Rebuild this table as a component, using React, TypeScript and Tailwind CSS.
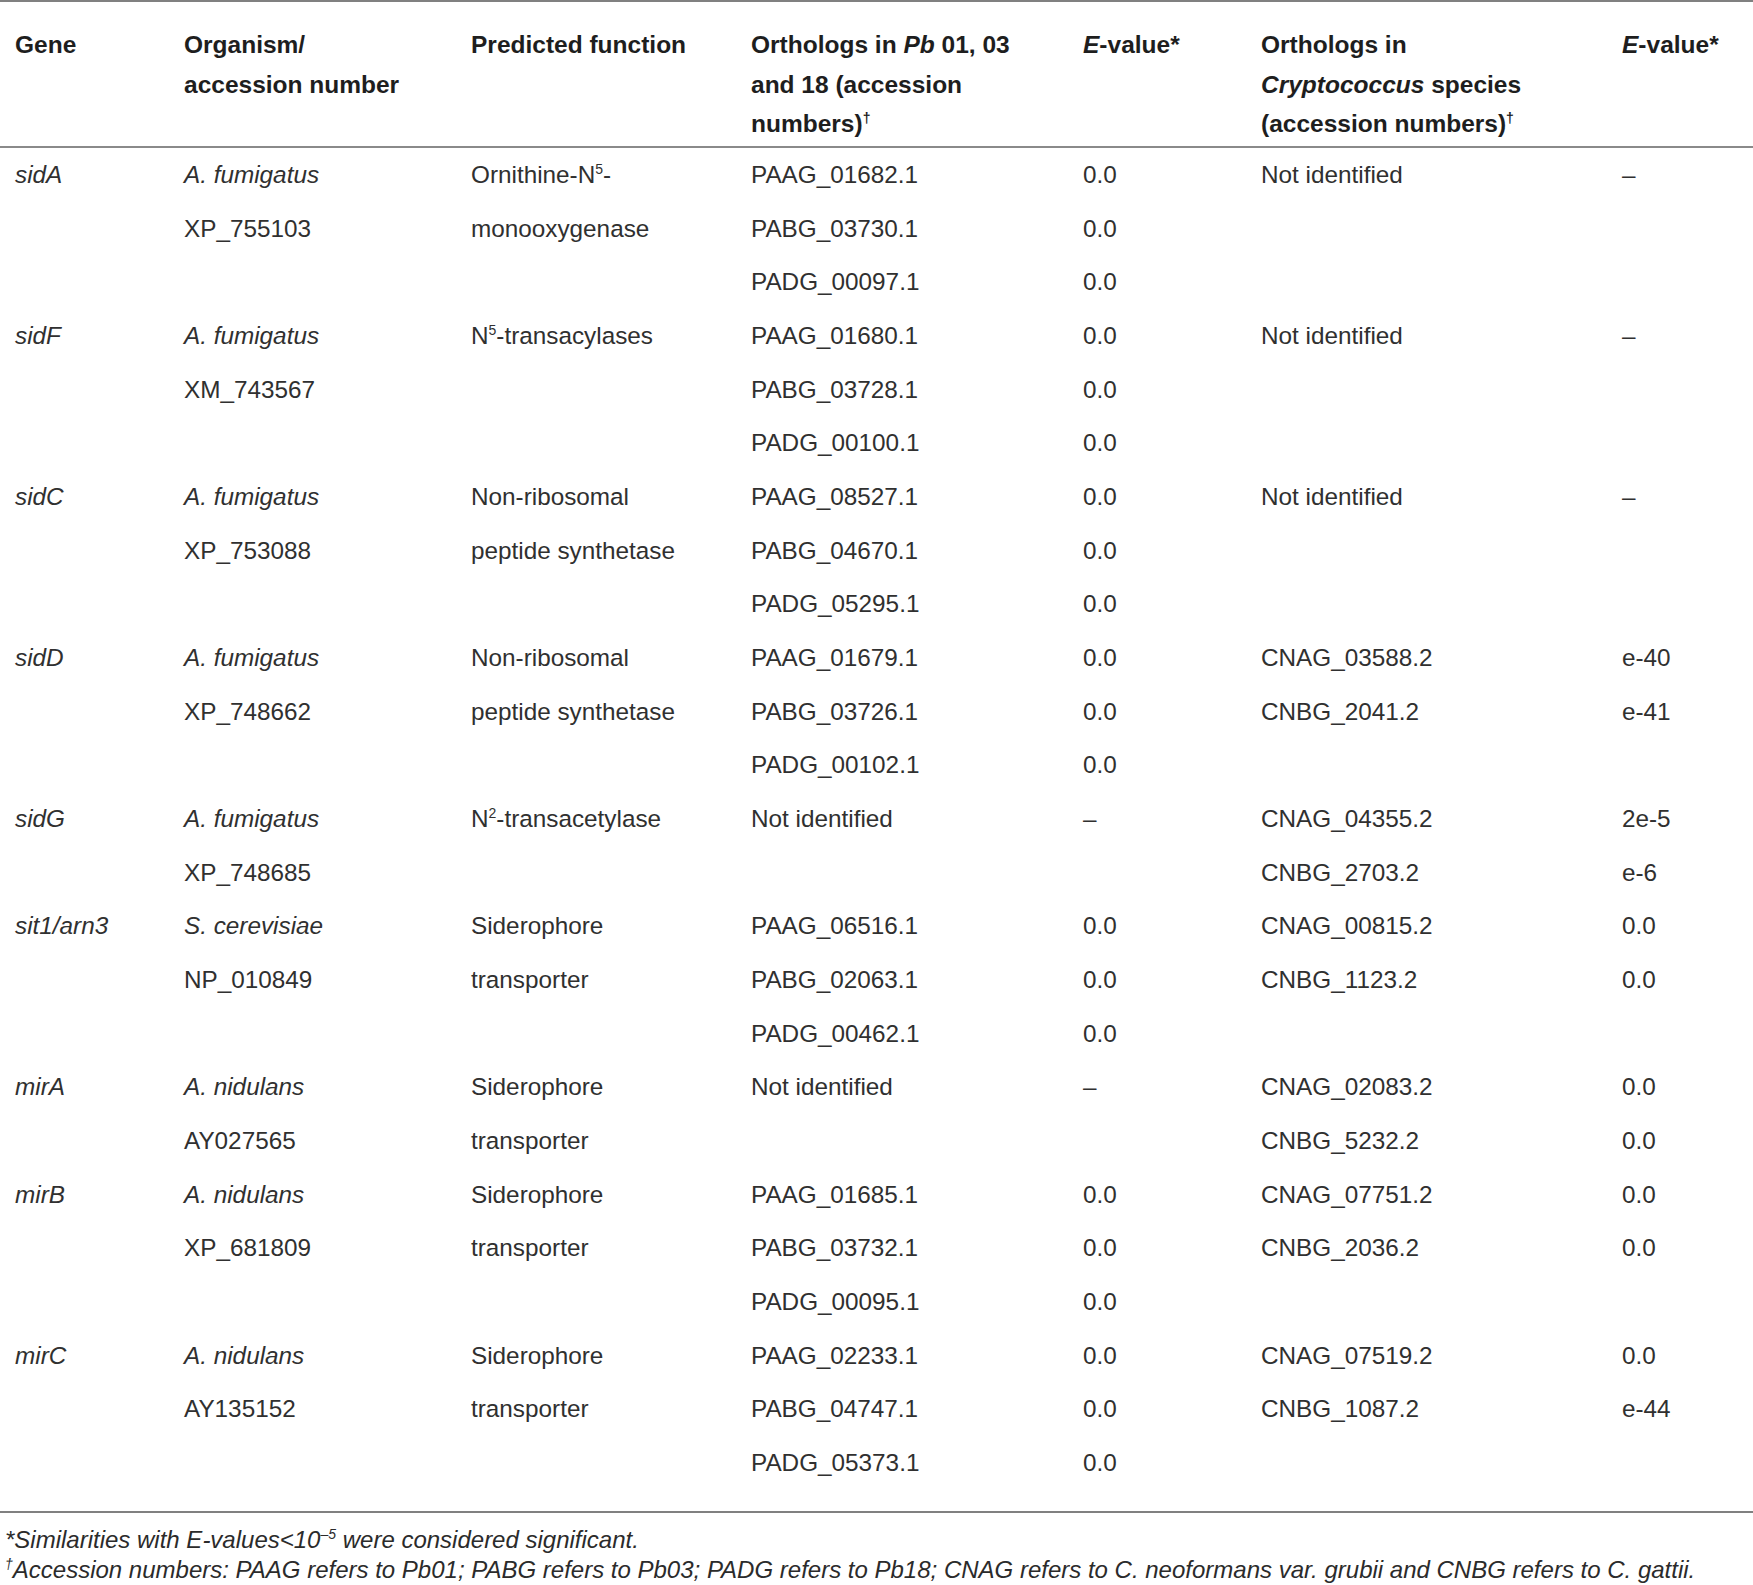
import React from "react";

type Cell = React.ReactNode[];
type Group = { gene: string; org: Cell; fn: Cell; pb: Cell; pe: Cell; cr: Cell; ce: Cell };

const I = ({ children }: { children: React.ReactNode }) => <i>{children}</i>;
const Sup = ({ children }: { children: React.ReactNode }) => (
  <sup className="text-[14px] relative top-[-9px] align-baseline leading-none">{children}</sup>
);

const groups: Group[] = [
  {
    gene: "sidA",
    org: [<I>A. fumigatus</I>, "XP_755103"],
    fn: [<>Ornithine-N<Sup>5</Sup>-</>, "monooxygenase"],
    pb: ["PAAG_01682.1", "PABG_03730.1", "PADG_00097.1"],
    pe: ["0.0", "0.0", "0.0"],
    cr: ["Not identified"],
    ce: ["–"],
  },
  {
    gene: "sidF",
    org: [<I>A. fumigatus</I>, "XM_743567"],
    fn: [<>N<Sup>5</Sup>-transacylases</>],
    pb: ["PAAG_01680.1", "PABG_03728.1", "PADG_00100.1"],
    pe: ["0.0", "0.0", "0.0"],
    cr: ["Not identified"],
    ce: ["–"],
  },
  {
    gene: "sidC",
    org: [<I>A. fumigatus</I>, "XP_753088"],
    fn: ["Non-ribosomal", "peptide synthetase"],
    pb: ["PAAG_08527.1", "PABG_04670.1", "PADG_05295.1"],
    pe: ["0.0", "0.0", "0.0"],
    cr: ["Not identified"],
    ce: ["–"],
  },
  {
    gene: "sidD",
    org: [<I>A. fumigatus</I>, "XP_748662"],
    fn: ["Non-ribosomal", "peptide synthetase"],
    pb: ["PAAG_01679.1", "PABG_03726.1", "PADG_00102.1"],
    pe: ["0.0", "0.0", "0.0"],
    cr: ["CNAG_03588.2", "CNBG_2041.2"],
    ce: ["e-40", "e-41"],
  },
  {
    gene: "sidG",
    org: [<I>A. fumigatus</I>, "XP_748685"],
    fn: [<>N<Sup>2</Sup>-transacetylase</>],
    pb: ["Not identified"],
    pe: ["–"],
    cr: ["CNAG_04355.2", "CNBG_2703.2"],
    ce: ["2e-5", "e-6"],
  },
  {
    gene: "sit1/arn3",
    org: [<I>S. cerevisiae</I>, "NP_010849"],
    fn: ["Siderophore", "transporter"],
    pb: ["PAAG_06516.1", "PABG_02063.1", "PADG_00462.1"],
    pe: ["0.0", "0.0", "0.0"],
    cr: ["CNAG_00815.2", "CNBG_1123.2"],
    ce: ["0.0", "0.0"],
  },
  {
    gene: "mirA",
    org: [<I>A. nidulans</I>, "AY027565"],
    fn: ["Siderophore", "transporter"],
    pb: ["Not identified"],
    pe: ["–"],
    cr: ["CNAG_02083.2", "CNBG_5232.2"],
    ce: ["0.0", "0.0"],
  },
  {
    gene: "mirB",
    org: [<I>A. nidulans</I>, "XP_681809"],
    fn: ["Siderophore", "transporter"],
    pb: ["PAAG_01685.1", "PABG_03732.1", "PADG_00095.1"],
    pe: ["0.0", "0.0", "0.0"],
    cr: ["CNAG_07751.2", "CNBG_2036.2"],
    ce: ["0.0", "0.0"],
  },
  {
    gene: "mirC",
    org: [<I>A. nidulans</I>, "AY135152"],
    fn: ["Siderophore", "transporter"],
    pb: ["PAAG_02233.1", "PABG_04747.1", "PADG_05373.1"],
    pe: ["0.0", "0.0", "0.0"],
    cr: ["CNAG_07519.2", "CNBG_1087.2"],
    ce: ["0.0", "e-44"],
  },
];

const gridCols = "grid grid-cols-[169px_287px_280px_332px_178px_361px_1fr] pl-[15px]";

function Lines({ items }: { items: Cell }) {
  return (
    <div className="flex flex-col">
      {items.map((t, i) => (
        <div key={i} className="h-[53.67px] leading-[53.67px] whitespace-nowrap">
          {t}
        </div>
      ))}
    </div>
  );
}

export default function App() {
  return (
    <div
      className="w-[1753px] h-[1585px] bg-white text-[#303030] overflow-hidden"
      style={{ fontFamily: '"Liberation Sans", Arial, sans-serif' }}
    >
      <div className="h-[2px] bg-[#808080]" />
      {/* Header */}
      <div className={`${gridCols} pt-[23px] pb-[2px] text-[24.5px] font-bold leading-[39.7px] text-[#1e1e1e]`}>
        <div>Gene</div>
        <div>
          Organism/
          <br />
          accession number
        </div>
        <div>Predicted function</div>
        <div>
          Orthologs in <i>Pb</i> 01, 03
          <br />
          and 18 (accession
          <br />
          numbers)<Sup>†</Sup>
        </div>
        <div>
          <i>E</i>-value*
        </div>
        <div>
          Orthologs in
          <br />
          <i>Cryptococcus</i> species
          <br />
          (accession numbers)<Sup>†</Sup>
        </div>
        <div>
          <i>E</i>-value*
        </div>
      </div>
      <div className="h-[2px] bg-[#8a8a8a]" />
      {/* Body */}
      <div className="pb-[21px] text-[24.3px]">
        {groups.map((g) => (
          <div key={g.gene} className={gridCols}>
            <Lines items={[<I>{g.gene}</I>]} />
            <Lines items={g.org} />
            <Lines items={g.fn} />
            <Lines items={g.pb} />
            <Lines items={g.pe} />
            <Lines items={g.cr} />
            <Lines items={g.ce} />
          </div>
        ))}
      </div>
      <div className="h-[2px] bg-[#808080]" />
      {/* Footnotes */}
      <div className="pl-[5px] pt-[12px] italic text-[24px] leading-[30px] text-[#2b2b2b]">
        <div className="whitespace-nowrap">
          *Similarities with E-values&lt;10<Sup>–5</Sup> were considered significant.
        </div>
        <div className="whitespace-nowrap">
          <Sup>†</Sup>Accession numbers: PAAG refers to Pb01; PABG refers to Pb03; PADG refers to Pb18; CNAG refers to C.
          neoformans var. grubii and CNBG refers to C. gattii.
        </div>
      </div>
    </div>
  );
}
